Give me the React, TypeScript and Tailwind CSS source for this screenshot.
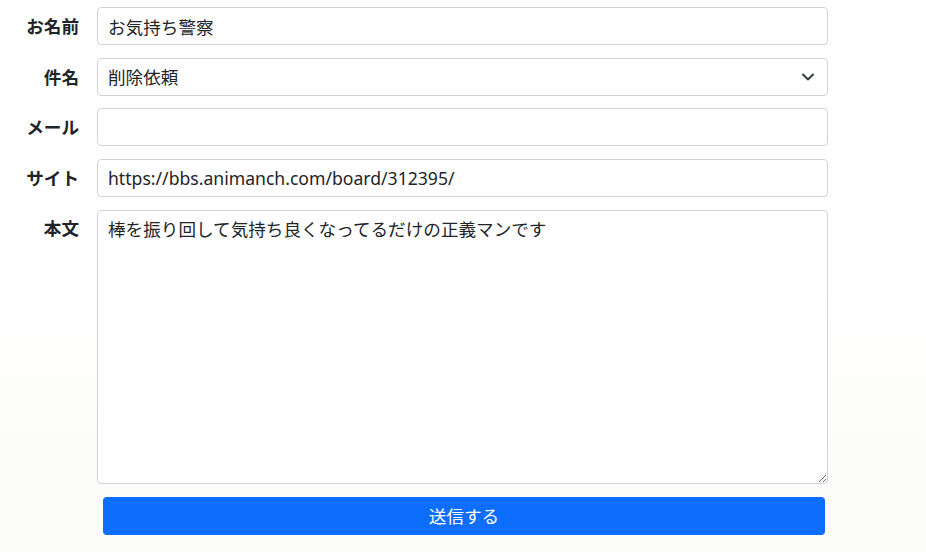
import React from "react";

const font = { fontFamily: '"Noto Sans", "Noto Sans CJK JP", sans-serif' };

const Label: React.FC<{ text: string; top?: boolean }> = ({ text, top }) => (
  <label
    className={`w-[79px] shrink-0 text-right text-[17.6px] font-bold text-[#212529] ${
      top ? "self-start pt-[5px]" : ""
    }`}
  >
    {text}
  </label>
);

const inputCls =
  "h-[38px] w-[731px] rounded-[4px] border border-[#ced4da] bg-white px-[10px] text-[17.6px] text-[#212529] outline-none";

export default function App() {
  return (
    <div
      className="min-h-[552px] w-[926px] bg-gradient-to-b from-white via-white to-[#fbfbf9] pt-[7px]"
      style={font}
    >
      <div className="flex flex-col">
        <div className="flex items-center gap-[18px]">
          <Label text="お名前" />
          <input className={inputCls} defaultValue="お気持ち警察" style={font} />
        </div>

        <div className="mt-[13px] flex items-center gap-[18px]">
          <Label text="件名" />
          <div className="relative">
            <select
              className={`${inputCls} appearance-none`}
              defaultValue="削除依頼"
              style={font}
            >
              <option>削除依頼</option>
            </select>
            <svg
              className="pointer-events-none absolute right-[13px] top-[14px]"
              width="14"
              height="10"
              viewBox="0 0 14 10"
              fill="none"
              stroke="#343a40"
              strokeWidth="2"
              strokeLinecap="round"
              strokeLinejoin="round"
            >
              <path d="M2 2.5l5 5 5-5" />
            </svg>
          </div>
        </div>

        <div className="mt-[12px] flex items-center gap-[18px]">
          <Label text="メール" />
          <input className={inputCls} style={font} />
        </div>

        <div className="mt-[13px] flex items-center gap-[18px]">
          <Label text="サイト" />
          <input
            className={inputCls}
            defaultValue="https://bbs.animanch.com/board/312395/"
            style={font}
          />
        </div>

        <div className="mt-[13px] flex gap-[18px]">
          <Label text="本文" top />
          <textarea
            className="h-[274px] w-[731px] rounded-[4px] border border-[#ced4da] bg-white px-[10px] py-[5px] text-[17.6px] leading-[26px] text-[#212529] outline-none"
            defaultValue="棒を振り回して気持ち良くなってるだけの正義マンです"
            style={font}
          />
        </div>

        <button
          className="mt-[13px] ml-[103px] h-[38px] w-[722px] rounded-[4px] bg-[#0d6efd] text-[17.6px] text-white"
          style={font}
        >
          送信する
        </button>
      </div>
    </div>
  );
}
